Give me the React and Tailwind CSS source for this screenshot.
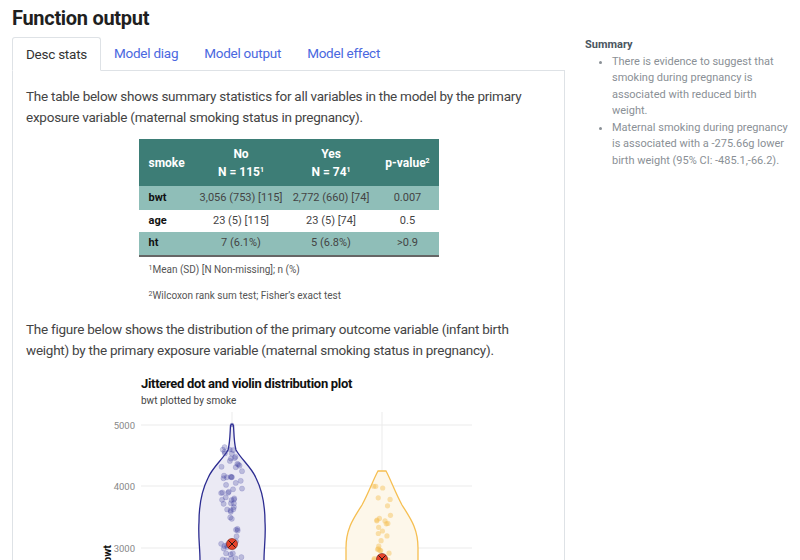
import { useMemo } from 'react'

const tabs = ['Desc stats', 'Model diag', 'Model output', 'Model effect']

const rows = [
  { name: 'bwt', no: '3,056 (753) [115]', yes: '2,772 (660) [74]', p: '0.007', shade: true },
  { name: 'age', no: '23 (5) [115]', yes: '23 (5) [74]', p: '0.5', shade: false },
  { name: 'ht', no: '7 (6.1%)', yes: '5 (6.8%)', p: '>0.9', shade: true },
]

// y position of a bwt value on the plot (page coords)
const yOf = (v) => 425 + (5000 - v) * 0.0615

function makeDots(seed, n, cx, spread, top, bottom) {
  let s = seed
  const rand = () => {
    s = (s * 9301 + 49297) % 233280
    return s / 233280
  }
  const out = []
  for (let i = 0; i < n; i++) {
    out.push({ x: cx + (rand() - 0.5) * spread, y: top + rand() * (bottom - top) })
  }
  return out
}

function ViolinPlot() {
  const dotsNo = useMemo(() => makeDots(7, 70, 232, 22, 447, 575), [])
  const dotsYes = useMemo(() => makeDots(31, 34, 382, 18, 484, 575), [])

  const violinNo =
    'M230.5,425.5 Q232,423 233.5,425.5 C234,434 234,443 236,450 C241,459 252,468 256,478 C262,490 265,505 265,522 C266,535 264,548 264,560 L264,600 L200,600 L200,560 C200,548 198,535 199,522 C199,505 202,490 208,478 C212,468 223,459 228,450 C230,443 230,434 230.5,425.5 Z'
  const violinYes =
    'M378,471 L386,471 C390,478 395,492 402,505 C410,518 418,528 418,548 L418,600 L346,600 L346,548 C346,528 354,518 362,505 C369,492 374,478 378,471 Z'

  return (
    <svg width="400" height="200" viewBox="0 0 400 200" className="block ml-[64px]" style={{ fontFamily: 'Roboto, sans-serif' }}>
      <g transform="translate(-90,-365)">
        <text x="141" y="388" fontSize="13" fontWeight="700" fill="#111" letterSpacing="-0.3">Jittered dot and violin distribution plot</text>
        <text x="141" y="404" fontSize="10" fill="#444">bwt plotted by smoke</text>

        {[425, 486, 548].map((y) => (
          <line key={y} x1="141" x2="472" y1={y} y2={y} stroke="#ebebeb" strokeWidth="1" />
        ))}
        <line x1="232" x2="232" y1="412" y2="600" stroke="#ebebeb" />
        <line x1="382" x2="382" y1="412" y2="600" stroke="#ebebeb" />

        {[['5000', 425], ['4000', 486], ['3000', 548]].map(([t, y]) => (
          <text key={t} x="135" y={y + 3.5} fontSize="9.5" fill="#888" textAnchor="end">{t}</text>
        ))}
        <text x="111" y="554" fontSize="11" fontWeight="700" fill="#111" textAnchor="middle" transform="rotate(-90 111 554)">bwt</text>

        <path d={violinNo} fill="#ebeaf4" stroke="#2c2c91" strokeWidth="1.3" />
        <path d={violinYes} fill="#fdf7ea" stroke="#f6bf52" strokeWidth="1.3" />

        {dotsNo.map((d, i) => (
          <circle key={i} cx={d.x} cy={d.y} r="2.6" fill="#3f3f9e" fillOpacity="0.28" stroke="#3f3f9e" strokeOpacity="0.3" strokeWidth="0.5" />
        ))}
        <circle cx="230" cy={yOf(4600)} r="2.6" fill="#3f3f9e" fillOpacity="0.35" />
        <circle cx="232" cy="425" r="2.2" fill="#3f3f9e" fillOpacity="0.45" />
        {dotsYes.map((d, i) => (
          <circle key={i} cx={d.x} cy={d.y} r="2.6" fill="#f4bf55" fillOpacity="0.45" />
        ))}

        {[[232, 544], [382, 559]].map(([x, y]) => (
          <g key={x}>
            <circle cx={x} cy={y} r="5.5" fill="#e8432a" stroke="#6b1a0e" strokeWidth="0.6" />
            <path d={`M${x - 3.5},${y - 3.5} L${x + 3.5},${y + 3.5} M${x + 3.5},${y - 3.5} L${x - 3.5},${y + 3.5}`} stroke="#111" strokeWidth="0.9" />
          </g>
        ))}
      </g>
    </svg>
  )
}

export default function App() {
  return (
    <div className="w-[800px] h-[560px] overflow-hidden bg-white flex text-[#333]" style={{ fontFamily: 'Roboto, sans-serif' }}>
      {/* Main column */}
      <div className="w-[565px] shrink-0 pl-3">
        <h2 className="pt-[4px] text-[20px] leading-[28px] font-bold tracking-[-0.3px] text-[#1f1f1f]">Function output</h2>

        {/* Tabs */}
        <div className="mt-[5px] flex border-b border-[#dee2e6] h-[34px] text-[13.5px] tracking-[-0.25px]">
          {tabs.map((t, i) => (
            <div
              key={t}
              className={
                i === 0
                  ? 'px-[13px] flex items-center text-[#333] bg-white border border-[#dee2e6] border-b-white rounded-t-[3px] -mb-px'
                  : 'px-[13px] flex items-center text-[#4a68e0]'
              }
            >
              {t}
            </div>
          ))}
        </div>

        {/* Tab panel */}
        <div className="border-x border-[#dee2e6] px-[13px] pt-[15px] h-[600px]">
          <p className="text-[13.5px] tracking-[-0.25px] leading-[21px] text-[#444]">
            The table below shows summary statistics for all variables in the model by the primary exposure variable (maternal smoking status in pregnancy).
          </p>

          {/* Summary table */}
          <div className="mt-[11px] flex justify-center">
            <div>
              <table className="w-[300px] border-collapse text-[11px] border-b-2 border-[#666]">
                <thead>
                  <tr className="bg-[#3d7d76] text-white font-bold text-[12px] h-[47px]">
                    <th className="w-[58px] pl-[10px] text-left">smoke</th>
                    <th className="w-[89px] text-center leading-[18px]">
                      No
                      <br />
                      N = 115<sup className="text-[7px]">1</sup>
                    </th>
                    <th className="w-[91px] text-center leading-[18px]">
                      Yes
                      <br />
                      N = 74<sup className="text-[7px]">1</sup>
                    </th>
                    <th className="text-center">
                      p-value<sup className="text-[7px]">2</sup>
                    </th>
                  </tr>
                </thead>
                <tbody>
                  {rows.map((r) => (
                    <tr key={r.name} className={r.shade ? 'bg-[#8fbeb8] h-[24px]' : 'bg-white h-[22px]'}>
                      <td className="pl-[10px] font-bold text-[#111]">{r.name}</td>
                      <td className="text-center text-[#444]">{r.no}</td>
                      <td className="text-center text-[#444]">{r.yes}</td>
                      <td className="text-center text-[#444]">{r.p}</td>
                    </tr>
                  ))}
                </tbody>
              </table>
              <div className="pl-[10px] text-[10px] text-[#555]">
                <p className="mt-[6px] leading-[13px]"><sup className="text-[7px]">1</sup>Mean (SD) [N Non-missing]; n (%)</p>
                <p className="mt-[13px] leading-[13px]"><sup className="text-[7px]">2</sup>Wilcoxon rank sum test; Fisher’s exact test</p>
              </div>
            </div>
          </div>

          <p className="mt-[17px] text-[13.5px] tracking-[-0.25px] leading-[21px] text-[#444]">
            The figure below shows the distribution of the primary outcome variable (infant birth weight) by the primary exposure variable (maternal smoking status in pregnancy).
          </p>

          <div className="mt-[4px]">
            <ViolinPlot />
          </div>
        </div>
      </div>

      {/* Sidebar */}
      <div className="flex-1 pl-[20px] pr-[8px] pt-[37px] text-[11px] leading-[16.5px]">
        <p className="font-bold text-[#4a5560]">Summary</p>
        <ul className="list-disc pl-[27px] text-[#8a9096]">
          <li>There is evidence to suggest that smoking during pregnancy is associated with reduced birth weight.</li>
          <li>Maternal smoking during pregnancy is associated with a -275.66g lower birth weight (95% CI: -485.1,-66.2).</li>
        </ul>
      </div>
    </div>
  )
}
